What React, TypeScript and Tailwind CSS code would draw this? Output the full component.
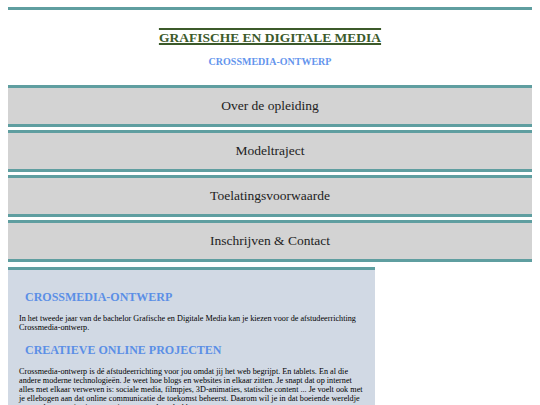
import React from "react";

const navItems = [
  "Over de opleiding",
  "Modeltraject",
  "Toelatingsvoorwaarde",
  "Inschrijven & Contact",
];

export default function App() {
  return (
    <div className="min-h-screen bg-white px-2 pt-[7px] [font-family:'Liberation_Serif','Times_New_Roman',serif]">
      <header className="flex h-[78px] flex-col items-center border-t-[3px] border-[#5f9ea0]">
        <h1 className="mt-[19px] text-[13.5px] font-bold leading-[17px] text-[#3c5a2a] decoration-[1.5px] [text-decoration-line:underline_overline]">
          GRAFISCHE EN DIGITALE MEDIA
        </h1>
        <p className="mt-[10px] text-[10px] font-bold leading-[12px] text-[#6495ed]">
          CROSSMEDIA-ONTWERP
        </p>
      </header>
      <nav className="flex flex-col">
        {navItems.map((item) => (
          <div
            key={item}
            className="mb-[3px] flex h-[42px] items-center justify-center border-y-[3px] border-[#5f9ea0] bg-[#d3d3d3] text-[13.5px] text-[#222]"
          >
            {item}
          </div>
        ))}
      </nav>
      <section className="mt-[2px] w-[70%] border-t-[3px] border-[#5f9ea0] bg-[#d1d9e4] px-[11px] pb-6 text-[#000]">
        <h2 className="mt-[20px] pl-[6px] text-[12px] font-bold leading-[14px] text-[#5b8fe6]">
          CROSSMEDIA-ONTWERP
        </h2>
        <p className="mt-[10px] text-[8.2px] leading-[9px]">
          In het tweede jaar van de bachelor Grafische en Digitale Media kan je kiezen voor de afstudeerrichting Crossmedia-ontwerp.
        </p>
        <h2 className="mt-[11px] pl-[6px] text-[12px] font-bold leading-[14px] text-[#5b8fe6]">
          CREATIEVE ONLINE PROJECTEN
        </h2>
        <p className="mt-[10px] text-[8.2px] leading-[9px]">
          Crossmedia-ontwerp is dé afstudeerrichting voor jou omdat jij het web begrijpt. En tablets. En al die andere moderne technologieën. Je weet hoe blogs en websites in elkaar zitten. Je snapt dat op internet alles met elkaar verweven is: sociale media, filmpjes, 3D-animaties, statische content ... Je voelt ook met je ellebogen aan dat online communicatie de toekomst beheerst. Daarom wil je in dat boeiende wereldje meespelen en er je eigen creatieve stempel op drukken.
        </p>
      </section>
    </div>
  );
}
